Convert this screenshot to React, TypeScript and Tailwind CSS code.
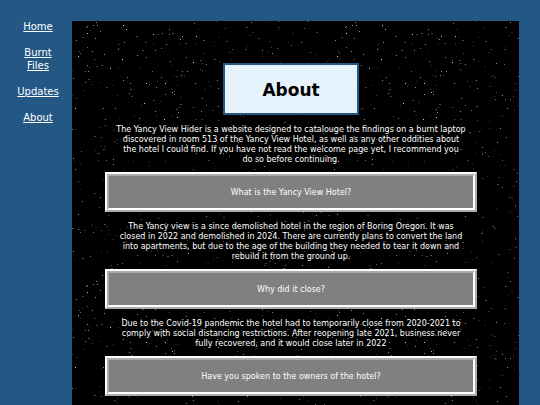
import React from "react";

type Star = { x: number; y: number; w: number; fill: string };

const TILE = 259;

// brighter stars are placed by hand, the faint ones are scattered
const BRIGHT: [number, number][] = [
  [51, 4], [21, 4], [122, 2], [54, 8], [14, 6], [28, 10], [15, 12], [4, 19], [23, 17],
  [81, 13], [52, 21], [108, 18], [110, 15], [90, 12], [97, 13], [124, 15], [94, 23],
  [20, 30], [6, 35], [65, 34], [74, 36], [50, 38], [98, 40], [15, 44], [38, 47],
  [115, 50], [134, 43], [121, 41], [1, 57], [89, 56], [74, 62], [58, 62], [84, 66],
  [93, 62], [123, 62], [57, 72], [100, 71], [145, 59], [146, 67], [72, 82], [106, 91],
  [31, 87], [3, 87], [129, 90], [83, 90], [105, 96], [67, 97], [33, 98], [92, 98],
];

const FILLS = ["#1a1a1a", "#242424", "#2e2e2e", "#3c3c3c", "#4c4c4c", "#666666", "#8c8c8c"];

function scatter(count: number): Star[] {
  let seed = 513;
  const next = () => {
    seed = (seed + 0x6d2b79f5) | 0;
    let t = Math.imul(seed ^ (seed >>> 15), 1 | seed);
    t = (t + Math.imul(t ^ (t >>> 7), 61 | t)) ^ t;
    return ((t ^ (t >>> 14)) >>> 0) / 4294967296;
  };
  return Array.from({ length: count }, () => {
    const shade = Math.floor(next() * FILLS.length);
    return {
      x: Math.floor(next() * TILE),
      y: Math.floor(next() * TILE),
      w: shade < 5 && next() > 0.5 ? 2 : 1,
      fill: FILLS[shade],
    };
  });
}

const STARS: Star[] = [
  ...scatter(600),
  ...BRIGHT.map(([x, y], i) => ({ x, y, w: 1, fill: i % 3 === 0 ? "#c8c8c8" : "#8a8a8a" })),
];

const LINKS = ["Home", "Burnt Files", "Updates", "About"];

const INTRO = `The Yancy View Hider is a website designed to catalouge the findings on a burnt laptop
discovered in room 513 of the Yancy View Hotel, as well as any other oddities about
the hotel I could find. If you have not read the welcome page yet, I recommend you
do so before continuing.`;

const QUESTIONS = [
  {
    title: "What is the Yancy View Hotel?",
    body: `The Yancy view is a since demolished hotel in the region of Boring Oregon. It was
closed in 2022 and demolished in 2024. There are currently plans to convert the land
into apartments, but due to the age of the building they needed to tear it down and
rebuild it from the ground up.`,
  },
  {
    title: "Why did it close?",
    body: `Due to the Covid-19 pandemic the hotel had to temporarily close from 2020-2021 to
comply with social distancing restrictions. After reopening late 2021, business never
fully recovered, and it would close later in 2022`,
  },
  { title: "Have you spoken to the owners of the hotel?", body: "" },
];

function StarField() {
  return (
    <svg className="absolute inset-0 h-full w-full" aria-hidden="true" shapeRendering="crispEdges">
      <defs>
        <pattern id="stars" width={TILE} height={TILE} patternUnits="userSpaceOnUse">
          {STARS.map((s, i) => (
            <rect key={i} x={s.x} y={s.y} width={s.w} height="1" fill={s.fill} />
          ))}
        </pattern>
      </defs>
      <rect width="100%" height="100%" fill="url(#stars)" />
    </svg>
  );
}

export default function App() {
  return (
    <div className="flex h-screen overflow-hidden bg-[#235784] pr-[21px] font-['DejaVu_Sans',sans-serif] text-white">
      <nav className="flex w-[72px] shrink-0 flex-col gap-[13px] pt-5 pr-2 pl-3 text-center text-[10px] leading-[13px]">
        {LINKS.map((label) => (
          <a key={label} href="#" className="underline">
            {label}
          </a>
        ))}
      </nav>

      <main className="relative mt-[21px] flex-1 bg-black">
        <StarField />
        <div className="relative flex flex-col pt-[42px] pr-[42px] pl-[33px] text-center text-[8px] leading-[10px]">
          <h1 className="mx-auto mb-[10px] border-2 border-[#235784] bg-[#e7f3fc] px-[37px] pt-[15px] pb-[13px] text-[17px] leading-5 font-bold text-black">
            About
          </h1>
          <p className="whitespace-pre-line">{INTRO}</p>
          {QUESTIONS.map((q) => (
            <section key={q.title} className="mt-[7px]">
              <button
                type="button"
                className="mb-[10px] block w-full border-4 border-white bg-[#808080] pt-3 pb-[10px] [border-style:ridge]"
              >
                {q.title}
              </button>
              {q.body && <p className="whitespace-pre-line">{q.body}</p>}
            </section>
          ))}
        </div>
      </main>
    </div>
  );
}
